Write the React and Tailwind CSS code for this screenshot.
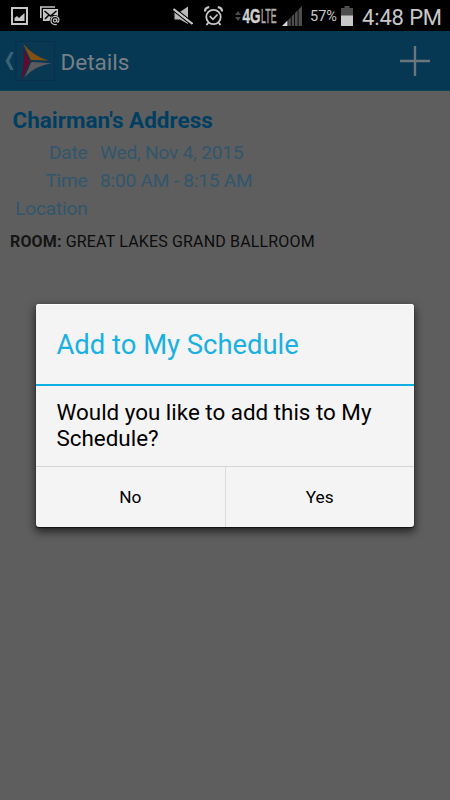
import { useState } from 'react';

const details = [
  { label: 'Date', value: 'Wed, Nov 4, 2015' },
  { label: 'Time', value: '8:00 AM - 8:15 AM' },
  { label: 'Location', value: '' },
];

export default function App() {
  const [open, setOpen] = useState(true);

  return (
    <div className="relative flex h-[800px] w-[450px] flex-col overflow-hidden bg-[#5e5e5e] font-['Roboto',sans-serif]">
      <StatusBar />
      <Header onAdd={() => setOpen(true)} />

      <main className="flex flex-col">
        <h2 className="pt-[15px] pl-[12.5px] text-[22.5px] leading-[28px] font-bold text-[#003e62]">Chairman&#39;s Address</h2>
        <dl className="mt-[5px] flex flex-col text-[19.2px] leading-[28px] tracking-[-0.25px] text-[#31566c]">
          {details.map((row) => (
            <div key={row.label} className="flex h-[28px] gap-[12.5px]">
              <dt className="w-[87.5px] text-right">{row.label}</dt>
              <dd>{row.value}</dd>
            </div>
          ))}
        </dl>
        <p className="mt-[8px] pl-[10px] text-[16px] leading-[22px] tracking-[0.16px] text-[#0c0c0c]">
          <b className="text-[#151515]">ROOM:</b> GREAT LAKES GRAND BALLROOM
        </p>
      </main>

      {open && <ConfirmDialog onClose={() => setOpen(false)} />}
    </div>
  );
}

function StatusBar() {
  return (
    <div className="flex h-[31px] shrink-0 items-center bg-black text-[#c8c8c8]">
      <PictureIcon />
      <MailIcon />
      <MuteIcon />
      <AlarmIcon />
      <NetworkIcon />
      <SignalIcon />
      <span className="ml-[8px] w-[31px] pt-[3px] text-[14.5px] whitespace-nowrap">57%</span>
      <BatteryIcon />
      <span className="ml-[9px] pt-[3px] text-[22px] tracking-[-0.15px] whitespace-nowrap">4:48 PM</span>
    </div>
  );
}

function Header({ onAdd }) {
  return (
    <header className="flex h-[60px] shrink-0 items-center border-b border-[#0b4059] bg-[#063854] text-[#787f84]">
      <svg className="ml-[5px] h-[20px] w-[10px]" viewBox="0 0 10 20">
        <path d="M5.5 1H8.7L4.3 10L8.7 19H5.5L0.5 10Z" fill="#3b6076" />
      </svg>
      <Logo />
      <h1 className="ml-[5.5px] pt-[4px] text-[22.5px]">Details</h1>
      <button className="mt-[1px] mr-[20px] ml-auto" onClick={onAdd} aria-label="Add">
        <svg className="h-[30px] w-[30px]" viewBox="0 0 30 30">
          <path d="M15 0V30M0 15H30" stroke="#6c757b" strokeWidth="2.4" />
        </svg>
      </button>
    </header>
  );
}

function ConfirmDialog({ onClose }) {
  return (
    <div className="absolute inset-0 flex items-start justify-center pt-[304px]">
      <div className="flex h-[223px] w-[378px] flex-col rounded-[3px] bg-[#f4f4f4] text-black shadow-[0_1px_1px_0px_#111,0_4px_9px_1px_rgba(0,0,0,0.6)]">
        <h3 className="flex h-[80px] items-center rounded-t-[3px] border-t border-white pt-[2px] pl-[20.5px] text-[27.4px] text-[#19b0e2]">Add to My Schedule</h3>
        <div className="h-[2px] bg-[#0eb0e2]" />
        <p className="h-[80px] pt-[13px] pl-[20.5px] text-[22.4px] leading-[26px]">
          Would you like to add this to My
          <br />
          Schedule?
        </p>
        <div className="flex flex-1 border-t border-[#d6d6d6] text-[17.3px]">
          <button className="flex-1 border-r border-[#dcdcdc] pt-[2px]" onClick={onClose}>No</button>
          <button className="flex-1 pt-[2px]" onClick={onClose}>Yes</button>
        </div>
      </div>
    </div>
  );
}

function Logo() {
  return (
    <svg className="h-[40px] w-[40px]" viewBox="0 0 40 40">
      <rect x="0.9" y="0.5" width="38.6" height="39" fill="#083852" stroke="#07314a" />
      <path d="M8 2.5L15.5 18.5L16.5 19L33.5 19.5Q17 14.5 8 2.5Z" fill="#835012" />
      <path d="M8.3 7Q10.5 22 6 37.5H7.2L15 20.5Z" fill="#650a2c" />
      <path d="M36.5 22.3L17 21L15.8 22L9.5 36.5Q18 25.5 36.5 22.3Z" fill="#5c5a5d" />
    </svg>
  );
}

function PictureIcon() {
  return (
    <svg className="ml-[11px] h-[18px] w-[17px]" viewBox="0 0 17 18">
      <path d="M0 0H17V18H0ZM2 2V16H15V2Z" fill="#c8c8c8" fillRule="evenodd" />
      <path d="M3.5 14V11L6 9L8 11L13.5 6V14Z" fill="#c8c8c8" />
    </svg>
  );
}

function MailIcon() {
  return (
    <svg className="ml-[12px] h-[20px] w-[20px]" viewBox="0 0 20 20">
      <path d="M0.8 12V1H15" fill="none" stroke="#c4c4c4" strokeWidth="1.6" />
      <rect x="3" y="3" width="15" height="12" fill="#c4c4c4" />
      <path d="M4.5 5L10.5 10L16.5 5M5 13L9 9M16 12L12.5 9" fill="none" stroke="#000" strokeWidth="1.5" />
      <circle cx="15.1" cy="14.5" r="5.4" fill="#000" />
      <circle cx="14.9" cy="14.5" r="1.6" fill="none" stroke="#c4c4c4" strokeWidth="1.1" />
      <path d="M16.8 12.5V15.3Q17.3 16.8 18.4 15.8Q19.8 12.5 17.4 11Q14.3 9.4 12 11.7Q10 14.5 11.8 17.2Q13.8 19.3 16.8 18.4" fill="none" stroke="#c4c4c4" strokeWidth="1.2" />
    </svg>
  );
}

function MuteIcon() {
  return (
    <svg className="ml-[113px] h-[20px] w-[20px]" viewBox="0 0 20 20">
      <path d="M1.5 6H7L15 0.5V18L7 13.5H1.5Z" fill="#b9b9b9" />
      <path d="M0 4.5L19 19.5" stroke="#000" strokeWidth="1.3" />
      <path d="M1 1.5L20 16.5" stroke="#000" strokeWidth="1.3" />
      <path d="M0.5 3L19.5 18" stroke="#c8c8c8" strokeWidth="2" />
    </svg>
  );
}

function AlarmIcon() {
  return (
    <svg className="ml-[11px] h-[20px] w-[19px]" viewBox="0 0 19 20" fill="none" stroke="#c8c8c8">
      <circle cx="9.5" cy="11" r="7.2" strokeWidth="1.8" />
      <path d="M0.8 5.5Q1.2 1.7 5.2 1.2M18.2 5.5Q17.8 1.7 13.8 1.2" strokeWidth="2.2" />
      <path d="M4.2 16.8L2.5 19M14.8 16.8L16.5 19" strokeWidth="2" />
      <path d="M5.7 10.2L9 13.3L13.5 8.5" strokeWidth="1.7" />
    </svg>
  );
}

function NetworkIcon() {
  return (
    <div className="ml-[12px] flex h-[24px] w-[43px] items-center">
      <svg className="h-[10px] w-[6px] shrink-0" viewBox="0 0 6 10">
        <path d="M0 4L3 0L6 4ZM0 6L3 10L6 6Z" fill="#4b4b4b" />
      </svg>
      <svg className="ml-[2px] h-[24px] w-[18px] shrink-0 overflow-visible" viewBox="0 0 18 24">
        <text transform="translate(-0.5 19) scale(0.64 1)" className="font-['Liberation_Sans',sans-serif] text-[21px] font-bold" fill="#d0d0d0" stroke="#d0d0d0" strokeWidth="0.5">4G</text>
      </svg>
      <svg className="h-[24px] w-[17px] shrink-0 overflow-visible" viewBox="0 0 17 24">
        <text transform="translate(0 19) scale(0.42 1)" className="font-['Liberation_Sans',sans-serif] text-[21px]" fill="#b0b0b0" stroke="#b0b0b0" strokeWidth="0.5">LTE</text>
      </svg>
    </div>
  );
}

function SignalIcon() {
  return (
    <svg className="ml-[4px] h-[20px] w-[20px]" viewBox="0 0 20 20">
      <path d="M0 20L5.5 14.5V20Z" fill="#d8d8d8" />
      <path d="M6.3 20V13.7L8.8 11.2V20ZM9.7 20V10.3L12.2 7.8V20ZM13 20V7L15.7 4.3V20ZM16.5 20V3.5L20 0V20Z" fill="#4d4d4d" />
    </svg>
  );
}

function BatteryIcon() {
  return (
    <svg className="h-[20px] w-[12px]" viewBox="0 0 12 20">
      <path d="M3.5 0H8.5V2H12V10H0V2H3.5Z" fill="#4d4d4d" />
      <rect y="9.5" width="12" height="10.5" fill="#c8c8c8" />
    </svg>
  );
}
